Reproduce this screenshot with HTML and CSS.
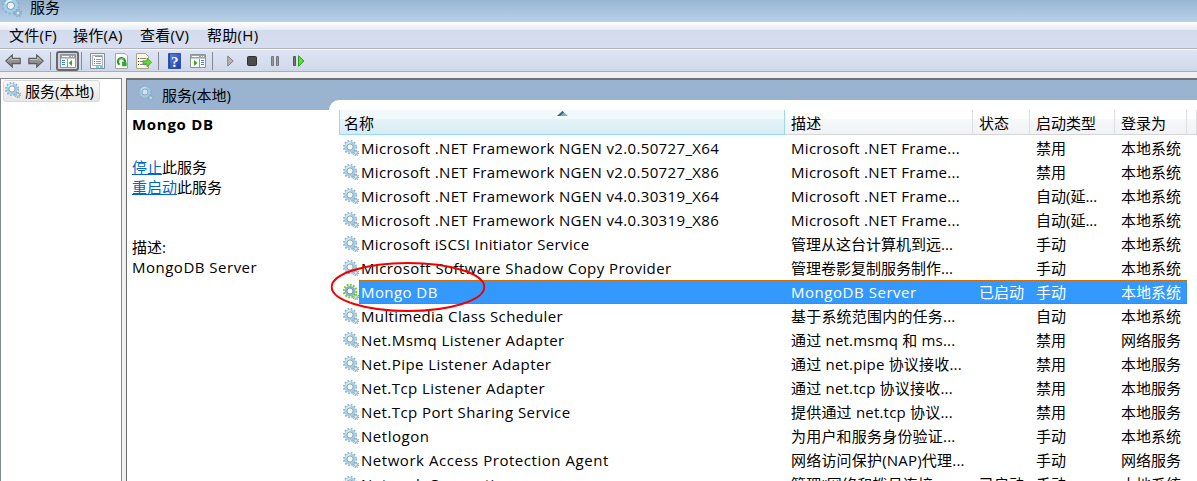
FILE: index.html
```
<!DOCTYPE html>
<html lang="zh-CN">
<head>
<meta charset="utf-8">
<title>服务</title>
<link rel="stylesheet" href="styles.css">
</head>
<body>
<svg class="defs" width="0" height="0">
  <defs>
    <linearGradient id="grey" x1="0" y1="0" x2="0" y2="1"><stop offset="0" stop-color="#b4b4b4"/><stop offset="1" stop-color="#737373"/></linearGradient>
    <linearGradient id="book" x1="0" y1="0" x2="1" y2="1"><stop offset="0" stop-color="#6184dc"/><stop offset="1" stop-color="#1b3cac"/></linearGradient>
    <symbol id="gear" viewBox="0 0 16 16">
      <circle cx="7" cy="7" r="6.1" fill="none" stroke="#8fabc0" stroke-width="1.9" stroke-dasharray="1.6 1.6"/>
      <circle cx="7" cy="7" r="4.4" fill="none" stroke="#a3d0e9" stroke-width="2.7"/>
      <path d="M3.2 5.2A4.4 4.4 0 0 1 8 2.7" fill="none" stroke="#d5f1fb" stroke-width="1.4"/>
      <circle cx="7" cy="7" r="3" fill="#fff" fill-opacity=".8" stroke="#7799b3" stroke-width=".8"/>
      <circle cx="12.8" cy="12.8" r="2.7" fill="none" stroke="#87a3b8" stroke-width="1.3" stroke-dasharray="1.06 1.06"/>
      <circle cx="12.8" cy="12.8" r="1.7" fill="#d5e8f1" stroke="#8db3cc"/>
    </symbol>
    <symbol id="gear-on" viewBox="0 0 16 16">
      <circle cx="7" cy="7" r="6.3" fill="none" stroke="#86cf00" stroke-width="2.1" stroke-dasharray="1.9 1.3"/>
      <circle cx="7" cy="7" r="4.2" fill="none" stroke="#7fb5d9" stroke-width="2.3"/>
      <circle cx="7" cy="7" r="3" fill="#fff" stroke="#557f9f" stroke-width=".8"/>
      <circle cx="12.8" cy="12.8" r="2.7" fill="none" stroke="#6cba10" stroke-width="1.3" stroke-dasharray="1.06 1.06"/>
      <circle cx="12.8" cy="12.8" r="1.7" fill="#d0e6ef" stroke="#86b0bb"/>
    </symbol>
    <symbol id="arrow" viewBox="0 0 16 14">
      <path d="M.8 7 7.3.9V4.4H15.2V9.6H7.3V13.1Z" fill="url(#grey)" stroke="#5b5b5b" stroke-width="1.1"/>
      <path d="M2.5 7 6.3 3.3V5.4H14" fill="none" stroke="#d2d2d2" stroke-width=".7"/>
    </symbol>
    <symbol id="window" viewBox="0 0 16 14">
      <path d="M.5.5H15.5V13.5H.5Z" fill="#fff" stroke="#8b9599"/>
      <path d="M1 1H15V4H1Z" fill="#9ba4a7"/>
      <path d="M2 2.5H9M11 2.5H12M13 2.5H14" stroke="#fff"/>
      <path d="M1 4.5H15" stroke="#c5cbcd"/>
    </symbol>
  </defs>
</svg>
<div class="window">
  <header class="titlebar"><svg class="title-gear"><use href="#gear"/></svg><span>服务</span></header>
  <nav class="menubar"><span>文件(F)</span><span>操作(A)</span><span>查看(V)</span><span>帮助(H)</span></nav>
  <div class="toolbar">
    <svg class="arrow back"><use href="#arrow"/></svg>
    <svg class="arrow forward"><use href="#arrow"/></svg>
    <i class="divider after-arrows"></i>
    <span class="pressed"><svg width="16" height="14"><use href="#window"/><path d="M7.5 5V13" stroke="#8e989b"/><path d="M2 6.5H5M2 8.5H5M2 10.5H5" stroke="#3584d3"/><path d="M12 6V12L8.7 9Z" fill="#39a91a"/></svg></span>
    <i class="divider after-pressed"></i>
    <svg class="props" width="15" height="16" viewBox="0 0 15 16"><path d="M.5.5H14.5V15.5H.5Z" fill="#f7f7f3" stroke="#858f95"/><path d="M2.5 2.5H12.5V12.5H2.5Z" fill="#fff" stroke="#a6b1b7"/><path d="M5 3.5H12" stroke="#899aa5"/><path d="M4 6.5H5M4 8.5H5M4 10.5H5" stroke="#278bcd"/><path d="M6 6.5H11M6 8.5H11M6 10.5H11" stroke="#8d9ba5"/><path d="M6 14H9M10 14H13" stroke="#4bc1ef" stroke-width="1.5"/></svg>
    <svg class="refresh" width="13" height="16" viewBox="0 0 13 16"><path d="M.5.5H10L12.5 3V15.5H.5Z" fill="#fffdf5" stroke="#a4a79d"/><path d="M4.6 11.6A3.5 3.5 0 1 1 9.2 10.8" fill="none" stroke="#249a2a" stroke-width="2.2"/><path d="M7 8.6 11.6 9.6V13.2H7.2Z" fill="#2ba83a"/><path d="M3.6 7.4A3.6 3.6 0 0 1 9 6.2" fill="none" stroke="#74cb67" stroke-width=".8"/></svg>
    <svg class="export" width="16" height="16" viewBox="0 0 16 16"><path d="M.5.5H9.5L12.5 3.5V15.5H.5Z" fill="#fff9df" stroke="#aaa58f"/><path d="M2 5.5H3M2 8.5H3M2 11.5H3" stroke="#303030"/><path d="M4 5.5H10M4 8.5H9M4 11.5H10" stroke="#8c8490"/><path d="M7 7.8H11V5L15.6 9.3 11 13.7V11H7Z" fill="#67d437" stroke="#35a41d" stroke-width=".8"/></svg>
    <i class="divider after-export"></i>
    <svg class="help" width="13" height="16" viewBox="0 0 13 16"><path d="M.5.5H12.5V15.5H.5Z" fill="url(#book)" stroke="#3151a7"/><path d="M1.5 1V15" stroke="#2447aa"/><text x="3" y="13.5">?</text></svg>
    <svg class="console" width="16" height="14"><use href="#window"/><path d="M9.5 5V13" stroke="#8e989b"/><path d="M11 6.5H14M11 8.5H14M11 10.5H14" stroke="#5584b3"/><path d="M4 6V12L7.6 9Z" fill="#39a91a"/></svg>
    <i class="divider after-console"></i>
    <svg class="play" width="7" height="12"><path d="M.8 1 6.2 6 .8 11Z" fill="#b5b5b5" stroke="#7f7f84"/></svg>
    <svg class="stop" width="10" height="10"><rect x=".5" y=".5" width="9" height="9" rx="1" fill="#4c4c4c" stroke="#303030"/></svg>
    <svg class="pause" width="8" height="10"><path d="M.5.5H2.5V9.5H.5ZM5.5.5H7.5V9.5H5.5Z" fill="#999" stroke="#77777b"/></svg>
    <svg class="restart" width="12" height="12"><path d="M.5 1.5H2.5V10.5H.5Z" fill="#777" stroke="#555"/><path d="M5.5.8 11 6 5.5 11.2Z" fill="#5bdd3e" stroke="#27a31a"/></svg>
  </div>
  <main class="workspace">
    <aside class="tree"><div class="tree-item"><svg class="icon"><use href="#gear"/></svg><span>服务(本地)</span></div></aside>
    <section class="content">
      <div class="pane-title"><svg class="icon"><use href="#gear"/></svg><span>服务(本地)</span></div>
      <div class="pane-body">
        <div class="details">
          <h1>Mongo DB</h1>
          <p class="actions"><a>停止</a>此服务<br><a>重启动</a>此服务</p>
          <p class="description">描述:<br><span>MongoDB Server</span></p>
        </div>
        <div class="list">
          <div class="row head"><div class="sorted">名称<svg width="11" height="5"><path d="M0 5 5.5 0 11 5Z" fill="#76b1ca"/><path d="M0 5 5.5 0 7 1.5 3 5Z" fill="#3d6880"/></svg></div><div>描述</div><div>状态</div><div>启动类型</div><div>登录为</div><div></div></div>
          <div class="row"><div><svg class="icon"><use href="#gear"/></svg><span class="snug">Microsoft .NET Framework NGEN v2.0.50727_X64</span></div><div class="latin">Microsoft .NET Frame...</div><div></div><div>禁用</div><div>本地系统</div></div>
          <div class="row"><div><svg class="icon"><use href="#gear"/></svg><span class="snug">Microsoft .NET Framework NGEN v2.0.50727_X86</span></div><div class="latin">Microsoft .NET Frame...</div><div></div><div>禁用</div><div>本地系统</div></div>
          <div class="row"><div><svg class="icon"><use href="#gear"/></svg><span class="snug">Microsoft .NET Framework NGEN v4.0.30319_X64</span></div><div class="latin">Microsoft .NET Frame...</div><div></div><div>自动(延...</div><div>本地系统</div></div>
          <div class="row"><div><svg class="icon"><use href="#gear"/></svg><span class="snug">Microsoft .NET Framework NGEN v4.0.30319_X86</span></div><div class="latin">Microsoft .NET Frame...</div><div></div><div>自动(延...</div><div>本地系统</div></div>
          <div class="row"><div><svg class="icon"><use href="#gear"/></svg><span class="snug">Microsoft iSCSI Initiator Service</span></div><div class="cjk">管理从这台计算机到远...</div><div></div><div>手动</div><div>本地系统</div></div>
          <div class="row"><div><svg class="icon"><use href="#gear"/></svg><span>Microsoft Software Shadow Copy Provider</span></div><div class="cjk">管理卷影复制服务制作...</div><div></div><div>手动</div><div>本地系统</div></div>
          <div class="row selected"><div><svg class="icon"><use href="#gear-on"/></svg><span>Mongo DB</span></div><div class="wide">MongoDB Server</div><div>已启动</div><div>手动</div><div>本地系统</div></div>
          <div class="row"><div><svg class="icon"><use href="#gear"/></svg><span class="snug">Multimedia Class Scheduler</span></div><div>基于系统范围内的任务...</div><div></div><div>自动</div><div>本地系统</div></div>
          <div class="row"><div><svg class="icon"><use href="#gear"/></svg><span>Net.Msmq Listener Adapter</span></div><div>通过 net.msmq 和 ms...</div><div></div><div>禁用</div><div>网络服务</div></div>
          <div class="row"><div><svg class="icon"><use href="#gear"/></svg><span>Net.Pipe Listener Adapter</span></div><div>通过 net.pipe 协议接收...</div><div></div><div>禁用</div><div>本地服务</div></div>
          <div class="row"><div><svg class="icon"><use href="#gear"/></svg><span>Net.Tcp Listener Adapter</span></div><div>通过 net.tcp 协议接收...</div><div></div><div>禁用</div><div>本地服务</div></div>
          <div class="row"><div><svg class="icon"><use href="#gear"/></svg><span>Net.Tcp Port Sharing Service</span></div><div>提供通过 net.tcp 协议...</div><div></div><div>禁用</div><div>本地服务</div></div>
          <div class="row"><div><svg class="icon"><use href="#gear"/></svg><span class="wide">Netlogon</span></div><div>为用户和服务身份验证...</div><div></div><div>手动</div><div>本地系统</div></div>
          <div class="row"><div><svg class="icon"><use href="#gear"/></svg><span class="wide">Network Access Protection Agent</span></div><div>网络访问保护(NAP)代理...</div><div></div><div>手动</div><div>网络服务</div></div>
          <div class="row"><div><svg class="icon"><use href="#gear"/></svg><span class="wide">Network Connections</span></div><div>管理“网络和拨号连接...</div><div>已启动</div><div>手动</div><div>本地系统</div></div>
        </div>
      </div>
    </section>
  </main>
  <svg class="marker" width="156" height="52"><ellipse cx="78" cy="26" rx="76.3" ry="24" fill="none" stroke="#f00000" stroke-width="1.9"/></svg>
</div>
</body>
</html>
```
FILE: styles.css
```
* { box-sizing: border-box; }
body { margin: 0; }
.defs { position: absolute; }
.window {
  position: relative;
  width: 1197px;
  height: 481px;
  overflow: hidden;
  display: flex;
  flex-direction: column;
  background: #f0f0f0;
  color: #000;
  font: 15px/20px "Open Sans", "Noto Sans CJK SC", sans-serif;
  white-space: nowrap;
}
svg { flex: none; display: block; }
.icon { width: 16px; height: 16px; }
.titlebar {
  flex: 0 0 22px;
  display: flex;
  gap: 8px;
  padding-left: 2px;
  background: linear-gradient(#9ab5d1, #b8d1ea);
  line-height: 14px;
}
.title-gear { width: 20px; height: 20px; margin-top: -3px; }
.menubar {
  flex: 0 0 26px;
  display: flex;
  padding: 3px 0 0 9px;
  background: linear-gradient(#fff, #e6ebf5 8px, #d4dbed 8px, #d6deef);
}
.menubar span:nth-child(1) { width: 64px; }
.menubar span:nth-child(2) { width: 67px; }
.menubar span:nth-child(3) { width: 67px; }
.menubar span { letter-spacing: .3px; }
.toolbar {
  flex: 0 0 24px;
  display: flex;
  align-items: center;
  padding: 2px 0 0 5px;
  background: linear-gradient(#dfe5f4, #cfd8eb);
  border-top: 1px solid #b1b4bb;
  border-bottom: 1px solid #a6adbb;
  box-shadow: inset 0 1px #f7f9fd;
}
.arrow { width: 16px; height: 14px; }
.forward { margin-left: 7px; transform: scaleX(-1); }
.divider { width: 1px; height: 18px; background: #85898f; }
.after-arrows { margin: 0 5px 0 6px; }
.pressed { width: 23px; height: 20px; display: grid; place-items: center; border: 2px solid #67696f; border-radius: 3px; background: #d3d5dc; }
.after-pressed { margin-left: 2px; }
.props { margin-left: 8px; }
.refresh { margin-left: 10px; }
.export { margin-left: 8px; }
.after-export { margin-left: 6px; }
.help { margin-left: 9px; }
.help text { fill: #fff; font: bold 15px "Liberation Serif", serif; }
.console { margin-left: 9px; }
.after-console { margin-left: 6px; }
.play { margin-left: 14px; }
.stop { margin-left: 13px; }
.pause { margin-left: 14px; }
.restart { margin-left: 14px; }
.workspace { flex: 1; min-height: 0; display: flex; gap: 4px; padding-top: 6px; }
.tree { width: 122px; padding: 1px 0 0 2px; background: #fff; border: solid #828790; border-width: 1px 1px 0; }
.tree-item {
  width: 97px;
  height: 22px;
  display: flex;
  gap: 4px;
  padding: 1px 1px;
  border: 1px solid #d9d9d9;
  border-radius: 3px;
  background: linear-gradient(#fafafa, #e6e6e6);
  line-height: 19px;
}
.content { flex: 1; min-width: 0; border-left: 1px solid #696969; border-top: 2px solid #6f7175; background: #9ab3d0; }
.pane-title { height: 30px; display: flex; gap: 8px; padding: 5px 0 0 11px; line-height: 21px; }
.pane-title .icon { opacity: .75; }
.pane-body { height: 371px; display: flex; background: #fff; }
.details { width: 202px; padding: 4px 0 0 5px; }
h1 { margin: 0; font-size: 15px; line-height: 20px; letter-spacing: .7px; }
.actions { margin: 23px 0 0; }
.actions a { color: #0066cc; text-decoration: underline; }
.description { margin: 40px 0 0; }
.description span { letter-spacing: .5px; }
.list { width: 868px; height: 381px; margin-top: -10px; padding: 10px 0 0 10px; background: #fff; border-top-left-radius: 10px; }
.row {
  display: grid;
  grid-template-columns: 446px 188px 57px 85px 72px 10px;
  height: 24px;
  line-height: 24px;
}
.row > div { padding-left: 5px; }
.row > div:nth-child(2) { padding-left: 6px; letter-spacing: .2px; }
.row > div:nth-child(n+3) { padding-left: 6px; }
.row:not(.head) > :first-child { display: flex; gap: 2px; align-items: center; padding-left: 4px; letter-spacing: .43px; }
.row .icon { margin-top: -1px; }
.row .snug { letter-spacing: .36px; }
.row .wide.wide.wide { letter-spacing: .54px; }
.row > .latin.latin { letter-spacing: .3px; }
.row > .cjk.cjk { letter-spacing: 0; }
.row.head { height: 25px; margin-bottom: 1px; grid-template-rows: 25px; line-height: 27px; }
.head > div { border-right: 1px solid #dedfe1; border-bottom: 1px solid #d5d5d5; background: linear-gradient(#fff 9px, #f7f8fa 9px, #f1f2f4); }
.row.head > .sorted { position: relative; padding-left: 4px; border: solid #96d9f9; border-width: 0 1px 1px; background: linear-gradient(#f3fafd 9px, #e5f3f9 9px, #d8ebf4); }
.sorted svg { position: absolute; left: 217px; top: 1px; }
.selected { color: #fff; background: linear-gradient(#39f, #39f) 20px 0 / 828px 24px no-repeat; position: relative; }
.selected::after { content: ""; position: absolute; left: 20px; right: 10px; top: 0; bottom: 0; border: 1px dotted #cc6600; }
.marker { position: absolute; left: 330px; top: 261px; }
```
